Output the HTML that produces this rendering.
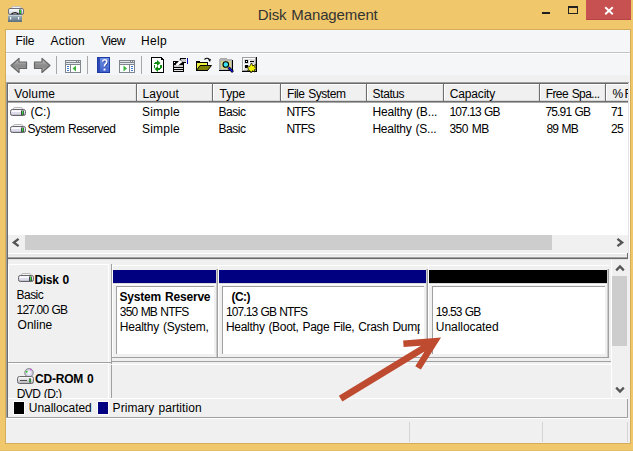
<!DOCTYPE html>
<html><head><meta charset="utf-8">
<style>
*{margin:0;padding:0;box-sizing:border-box}
html,body{width:633px;height:451px;overflow:hidden;background:#F0C76B;font-family:"Liberation Sans",sans-serif;font-size:12px;color:#000}
.a{position:absolute}
.t{position:absolute;white-space:nowrap;line-height:15px}
.b{font-weight:bold}
</style></head><body>
<svg class="a" style="left:6px;top:4px" width="20" height="20" viewBox="0 0 20 20"><defs><linearGradient id="tg1" x1="0" y1="0" x2="0" y2="1"><stop offset="0" stop-color="#FFFFFF"/><stop offset="0.6" stop-color="#E2E2EA"/><stop offset="1" stop-color="#B8B8C0"/></linearGradient><linearGradient id="tg2" x1="0" y1="0" x2="0" y2="1"><stop offset="0" stop-color="#A8B8C4"/><stop offset="1" stop-color="#5A6E7C"/></linearGradient></defs><path d="M5 4.5 Q5.5 2.5 7.5 2.5 L13 2.5 Q15 2.5 15.5 4.5" fill="#F0F0F0" stroke="#C0C0C0"/><rect x="2.5" y="4.5" width="15" height="6" rx="1.5" fill="url(#tg1)" stroke="#707078"/><path d="M5.5 10 Q9 7.2 12.5 10" fill="none" stroke="#1A1A1A" stroke-width="1.4"/><rect x="13" y="5.5" width="2.5" height="4.5" fill="#3A4448"/><rect x="13.6" y="6" width="1.3" height="3.5" fill="#30E030"/><rect x="2" y="11" width="14" height="7" fill="url(#tg2)"/><rect x="2" y="11" width="14" height="1" fill="#C4D0D8"/><rect x="4" y="13" width="1.2" height="2.5" fill="#F8F8F8"/><rect x="12" y="13" width="1.2" height="2.5" fill="#F8F8F8"/></svg>
<div class="a" style="left:542px;top:12px;width:8px;height:2px;background:#1E1E1E"></div>
<div class="a" style="left:568px;top:6px;width:10px;height:8px;border:1px solid #222;border-top-width:2px"></div>
<div class="a" style="left:586px;top:0;width:45px;height:20px;background:#C75050;border-bottom:1px solid #B84545"></div>
<svg class="a" style="left:586px;top:0" width="45" height="20"><path d="M19.2 7.2 L26.8 14.3 M26.8 7.2 L19.2 14.3" stroke="#fff" stroke-width="1.9"/></svg>
<div class="a" style="left:5px;top:29px;width:626px;height:415px;border:1px solid #D3AC5C;background:#F0F0F0"></div>
<div class="a" style="left:6px;top:30px;width:624px;height:22px;background:#F5F6F7"></div>
<div class="a" style="left:6px;top:52px;width:624px;height:1px;background:#C4C4C4"></div>
<div class="a" style="left:6px;top:53px;width:624px;height:22px;background:#F5F6F7;border-top:1px solid #FFFFFF"></div>
<div class="a" style="left:6px;top:75px;width:624px;height:8px;background:#F0F0F0"></div>
<svg class="a" style="left:0;top:0" width="270" height="80" viewBox="0 0 270 80">
<defs>
<linearGradient id="ag" x1="0" y1="0" x2="0" y2="1"><stop offset="0" stop-color="#D8D8D8"/><stop offset="0.45" stop-color="#8E8E8E"/><stop offset="0.6" stop-color="#8A8A8A"/><stop offset="1" stop-color="#C4C4C4"/></linearGradient>
<linearGradient id="hg2" x1="0" y1="0" x2="0" y2="1"><stop offset="0" stop-color="#7090E4"/><stop offset="1" stop-color="#3F5FCC"/></linearGradient>
<linearGradient id="hg" x1="0" y1="0" x2="1" y2="0"><stop offset="0" stop-color="#2B3FA8"/><stop offset="0.25" stop-color="#3552C0"/><stop offset="0.3" stop-color="#4B6AD6"/><stop offset="1" stop-color="#3A57C6"/></linearGradient>
</defs>
<!-- back -->
<path d="M11 65.5 L19 58.5 L19 62 L26.5 62 L26.5 68.5 L19 68.5 L19 72.5 Z" fill="url(#ag)" stroke="#666" stroke-width="1.2" stroke-linejoin="round"/>
<!-- forward -->
<path d="M50 65.5 L42 58.5 L42 62 L34.5 62 L34.5 68.5 L42 68.5 L42 72.5 Z" fill="url(#ag)" stroke="#666" stroke-width="1.2" stroke-linejoin="round"/>
<!-- separators -->
<g shape-rendering="crispEdges">
<rect x="56" y="56" width="1" height="18" fill="#A8A8A8"/>
<rect x="87" y="56" width="1" height="18" fill="#A8A8A8"/>
<rect x="141" y="56" width="1" height="18" fill="#A8A8A8"/>
<!-- console tree -->
<rect x="65" y="60" width="16" height="13" fill="#80868E"/>
<rect x="66" y="61" width="10" height="1" fill="#E6E8EC"/>
<rect x="77" y="61" width="1" height="1" fill="#E6E8EC"/>
<rect x="79" y="61" width="1" height="1" fill="#E6E8EC"/>
<rect x="66" y="63" width="14" height="1" fill="#E6E8EC"/>
<rect x="66" y="65" width="4" height="7" fill="#fff"/>
<rect x="71" y="65" width="9" height="7" fill="#fff"/>
<rect x="67" y="66" width="2" height="1" fill="#3D7FD2"/>
<rect x="67" y="68" width="2" height="1" fill="#3D7FD2"/>
<rect x="67" y="70" width="2" height="1" fill="#3D7FD2"/>
<!-- action pane -->
<rect x="119" y="60" width="16" height="13" fill="#80868E"/>
<rect x="120" y="61" width="10" height="1" fill="#E6E8EC"/>
<rect x="131" y="61" width="1" height="1" fill="#E6E8EC"/>
<rect x="133" y="61" width="1" height="1" fill="#E6E8EC"/>
<rect x="120" y="63" width="14" height="1" fill="#E6E8EC"/>
<rect x="120" y="65" width="9" height="7" fill="#fff"/>
<rect x="130" y="65" width="4" height="7" fill="#fff"/>
<rect x="131" y="66" width="2" height="1" fill="#3D7FD2"/>
<rect x="131" y="68" width="2" height="1" fill="#3D7FD2"/>
<rect x="131" y="70" width="2" height="1" fill="#3D7FD2"/>
<!-- help -->
<rect x="97" y="57" width="13" height="16" fill="#1F3BA8"/>
<rect x="98" y="58" width="11" height="14" fill="url(#hg2)"/>
<rect x="98" y="58" width="2" height="14" fill="#2C48B4"/>
</g>
<path d="M72.5 68.5 L76 65.5 L76 71.5 Z" fill="#3DB53D"/>
<path d="M127 68.5 L123.5 65.5 L123.5 71.5 Z" fill="#3DB53D"/>
<path d="M102.6 61.6 Q102.8 59.8 104.8 59.8 Q106.8 59.8 106.8 61.8 Q106.8 63.3 105.2 64.4 Q104.5 65 104.5 66.6" fill="none" stroke="#233a9a" stroke-width="1.6" transform="translate(0.6 0.6)"/><path d="M102.6 61.6 Q102.8 59.8 104.8 59.8 Q106.8 59.8 106.8 61.8 Q106.8 63.3 105.2 64.4 Q104.5 65 104.5 66.6" fill="none" stroke="#fff" stroke-width="1.6"/>
<rect x="103.6" y="68.6" width="1.9" height="1.9" fill="#fff"/>
<!-- refresh doc -->
<g shape-rendering="crispEdges">
<rect x="151" y="57" width="13" height="16" fill="#000"/>
<rect x="152" y="58" width="11" height="14" fill="#fff"/>
<rect x="161" y="57" width="3" height="3" fill="#F5F6F7"/>
<rect x="161" y="57" width="1" height="3" fill="#000"/>
<rect x="161" y="59" width="2" height="1" fill="#000"/>
<rect x="162" y="58" width="1" height="1" fill="#000"/>
<rect x="163" y="59" width="1" height="1" fill="#000"/>
<!-- green arrows -->
<rect x="155" y="62" width="3" height="2" fill="#0E8E0E"/>
<rect x="154" y="63" width="1" height="1" fill="#0E8E0E"/>
<rect x="153.5" y="65" width="1.5" height="3" fill="#0E8E0E"/>
<rect x="160" y="65" width="1.5" height="3" fill="#0E8E0E"/>
<rect x="157" y="68" width="3" height="2" fill="#0E8E0E"/>
<rect x="160" y="68" width="1" height="1" fill="#0E8E0E"/>
</g>
<path d="M157 60 L160.5 63 L157 66 Z" fill="#0E8E0E"/>
<path d="M158 66 L154.5 69 L158 72 Z" fill="#0E8E0E"/>
<!-- properties -->
<g shape-rendering="crispEdges">
<rect x="173" y="61" width="11" height="11" fill="#000"/>
<rect x="174" y="62" width="1" height="1" fill="#fff"/>
<rect x="174" y="65" width="9" height="2" fill="#C8C8C8"/>
<rect x="174" y="68" width="9" height="1" fill="#E0E0E0"/>
<rect x="174" y="70" width="9" height="1" fill="#E0E0E0"/>
<rect x="180" y="58" width="6" height="5" fill="#000"/>
<rect x="181" y="59" width="5" height="3" fill="#C8C8C8"/>
<rect x="187" y="58" width="1" height="6" fill="#0000B0"/>
</g>
<path d="M175.5 64.5 L180 59.5 L182.5 62 L178 66" fill="#fff" stroke="#000" stroke-width="0.9" stroke-dasharray="1 1"/>
<!-- open folder -->
<g shape-rendering="crispEdges">
<rect x="196" y="61" width="4" height="1" fill="#000"/>
<rect x="196" y="62" width="12" height="1" fill="#000"/>
<rect x="196" y="61" width="1" height="10" fill="#000"/>
<rect x="207" y="62" width="1" height="4" fill="#000"/>
<rect x="197" y="63" width="10" height="3" fill="#F0F040"/>
<rect x="197" y="66" width="3" height="3" fill="#F0F040"/>
<rect x="196" y="70" width="12" height="1" fill="#000"/>
</g>
<path d="M200 65.5 L211.5 65.5 L207.5 70.5 L196.5 70.5 Z" fill="#808000" stroke="#000" stroke-width="1"/>
<path d="M204.5 59.5 Q207 57 209.5 59.5" fill="none" stroke="#000" stroke-width="1.1"/>
<path d="M208 59.5 L211 59 L210 62 Z" fill="#000"/>
<!-- search -->
<g shape-rendering="crispEdges">
<rect x="220" y="58" width="7" height="2" fill="#A8A8A8"/>
<rect x="219" y="60" width="14" height="11" fill="#000"/>
<rect x="219" y="59" width="13" height="11" fill="#B4B4B4"/>
<rect x="221" y="61" width="10" height="8" fill="#D4D488"/>
</g>
<circle cx="225.8" cy="64.5" r="2.8" fill="#38E4F0" stroke="#000" stroke-width="1.1"/>
<path d="M228.5 67.5 L233 72" stroke="#000" stroke-width="2.6"/>
<path d="M228.8 67.8 L232.6 71.6" stroke="#1010F0" stroke-width="1.4"/>
<!-- last -->
<g shape-rendering="crispEdges">
<rect x="242" y="57" width="15" height="15" fill="#000"/>
<rect x="242" y="57" width="14" height="14" fill="#A0A0A0"/>
<rect x="243" y="58" width="12" height="12" fill="#fff"/>
<rect x="244" y="59" width="11" height="11" fill="#DCDCDC"/>
<rect x="245" y="60" width="3" height="3" fill="#000"/>
<rect x="246" y="61" width="1" height="1" fill="#fff"/>
<rect x="250" y="61" width="4" height="1" fill="#000"/>
<rect x="249" y="60" width="1" height="9" fill="#fff"/>
<rect x="244" y="64" width="11" height="1" fill="#fff"/>
<rect x="245" y="65" width="3" height="3" fill="#000"/>
<rect x="251" y="65" width="3" height="3" fill="#000"/>
</g>
<path d="M251.5 63 L252.8 65.8 L255.5 64.5 L254.6 67.3 L257 68.6 L254.3 69.6 L255 72 L252.4 70.8 L251 73 L250 70.6 L247.6 71.2 L248.6 68.8 L246.8 67.3 L249.5 66.6 Z" fill="#F4F400" stroke="#000" stroke-width="0.7"/>
</svg>

<div class="a" style="left:6px;top:82px;width:624px;height:172px;background:#FFFFFF"></div>
<div class="a" style="left:6px;top:82px;width:623px;height:1px;background:#A0A0A0"></div>
<div class="a" style="left:7px;top:83px;width:621px;height:1px;background:#696969"></div>
<div class="a" style="left:8px;top:84px;width:621px;height:18px;background:#F0F0F0"></div>
<div class="a" style="left:8px;top:84px;width:621px;height:1px;background:#FFFFFF"></div>
<div class="a" style="left:8px;top:84px;width:1px;height:17px;background:#FFFFFF"></div>
<div class="a" style="left:8px;top:100px;width:621px;height:1px;background:#D8D8D8"></div>
<div class="a" style="left:8px;top:101px;width:621px;height:1px;background:#6E6E6E"></div>
<div class="a" style="left:8px;top:102px;width:621px;height:1px;background:#A8A8A8"></div>
<div class="a" style="left:135px;top:85px;width:1px;height:15px;background:#E3E3E3"></div>
<div class="a" style="left:136px;top:84px;width:1px;height:17px;background:#6E6E6E"></div>
<div class="a" style="left:137px;top:85px;width:1px;height:15px;background:#FFFFFF"></div>
<div class="a" style="left:211px;top:85px;width:1px;height:15px;background:#E3E3E3"></div>
<div class="a" style="left:212px;top:84px;width:1px;height:17px;background:#6E6E6E"></div>
<div class="a" style="left:213px;top:85px;width:1px;height:15px;background:#FFFFFF"></div>
<div class="a" style="left:279px;top:85px;width:1px;height:15px;background:#E3E3E3"></div>
<div class="a" style="left:280px;top:84px;width:1px;height:17px;background:#6E6E6E"></div>
<div class="a" style="left:281px;top:85px;width:1px;height:15px;background:#FFFFFF"></div>
<div class="a" style="left:365px;top:85px;width:1px;height:15px;background:#E3E3E3"></div>
<div class="a" style="left:366px;top:84px;width:1px;height:17px;background:#6E6E6E"></div>
<div class="a" style="left:367px;top:85px;width:1px;height:15px;background:#FFFFFF"></div>
<div class="a" style="left:442px;top:85px;width:1px;height:15px;background:#E3E3E3"></div>
<div class="a" style="left:443px;top:84px;width:1px;height:17px;background:#6E6E6E"></div>
<div class="a" style="left:444px;top:85px;width:1px;height:15px;background:#FFFFFF"></div>
<div class="a" style="left:538px;top:85px;width:1px;height:15px;background:#E3E3E3"></div>
<div class="a" style="left:539px;top:84px;width:1px;height:17px;background:#6E6E6E"></div>
<div class="a" style="left:540px;top:85px;width:1px;height:15px;background:#FFFFFF"></div>
<div class="a" style="left:604px;top:85px;width:1px;height:15px;background:#E3E3E3"></div>
<div class="a" style="left:605px;top:84px;width:1px;height:17px;background:#6E6E6E"></div>
<div class="a" style="left:606px;top:85px;width:1px;height:15px;background:#FFFFFF"></div>
<div class="a" style="left:7px;top:102px;width:622px;height:40px;overflow:hidden">
<svg class="a" style="left:3px;top:5px" width="16" height="10" viewBox="0 0 16 10"><defs><linearGradient id="dg0" x1="0" y1="0" x2="0" y2="1"><stop offset="0" stop-color="#FFFFFF"/><stop offset="0.5" stop-color="#E0E0EC"/><stop offset="1" stop-color="#B4B4C0"/></linearGradient></defs><path d="M2.5 3 Q3 0.5 5 0.5 L11 0.5 Q13 0.5 13.5 3" fill="#F4F4F4" stroke="#B8B8B8" stroke-width="1"/><rect x="0.5" y="2.5" width="15" height="6" rx="1.8" fill="url(#dg0)" stroke="#66666C" stroke-width="1"/><rect x="2" y="4" width="9" height="3" fill="#DCDCEA"/><rect x="2" y="4" width="9" height="1" fill="#FAFAFF"/><rect x="11" y="3.5" width="3" height="4.5" fill="#404848"/><rect x="12" y="4" width="1.2" height="3.5" fill="#3AE03A"/></svg>
<svg class="a" style="left:3px;top:22px" width="16" height="10" viewBox="0 0 16 10"><defs><linearGradient id="dg1" x1="0" y1="0" x2="0" y2="1"><stop offset="0" stop-color="#FFFFFF"/><stop offset="0.5" stop-color="#E0E0EC"/><stop offset="1" stop-color="#B4B4C0"/></linearGradient></defs><path d="M2.5 3 Q3 0.5 5 0.5 L11 0.5 Q13 0.5 13.5 3" fill="#F4F4F4" stroke="#B8B8B8" stroke-width="1"/><rect x="0.5" y="2.5" width="15" height="6" rx="1.8" fill="url(#dg1)" stroke="#66666C" stroke-width="1"/><rect x="2" y="4" width="9" height="3" fill="#DCDCEA"/><rect x="2" y="4" width="9" height="1" fill="#FAFAFF"/><rect x="11" y="3.5" width="3" height="4.5" fill="#404848"/><rect x="12" y="4" width="1.2" height="3.5" fill="#3AE03A"/></svg>
</div>
<div class="a" style="left:8px;top:235px;width:620px;height:17px;background:#F0F0F0"></div>
<div class="a" style="left:25px;top:235px;width:527px;height:15px;background:#CDCDCD"></div>
<svg class="a" style="left:8px;top:235px" width="17" height="17"><path d="M10.6 3.8 L5.8 7.5 L10.6 11.2" fill="none" stroke="#555" stroke-width="2.3"/></svg>
<svg class="a" style="left:611px;top:235px" width="17" height="17"><path d="M6.4 3.8 L11.2 7.5 L6.4 11.2" fill="none" stroke="#555" stroke-width="2.3"/></svg>
<div class="a" style="left:6px;top:252px;width:624px;height:166px;background:#F0F0F0;"></div>
<div class="a" style="left:8px;top:253px;width:620px;height:1px;background:#FFFFFF;"></div>
<div class="a" style="left:8px;top:254px;width:620px;height:2px;background:#E8E8E8;"></div>
<div class="a" style="left:7px;top:257px;width:621px;height:1px;background:#A0A0A0;"></div>
<div class="a" style="left:7px;top:258px;width:621px;height:1px;background:#696969;"></div>
<div class="a" style="left:7px;top:259px;width:621px;height:1px;background:#E3E3E3;"></div>
<div class="a" style="left:627px;top:253px;width:1px;height:6px;background:#6A6A6A;"></div>
<div class="a" style="left:6px;top:83px;width:1px;height:335px;background:#A0A0A0;"></div>
<div class="a" style="left:7px;top:83px;width:1px;height:335px;background:#696969;"></div>
<div class="a" style="left:7px;top:417px;width:621px;height:1px;background:#A0A0A0;"></div>
<div class="a" style="left:627px;top:398px;width:1px;height:20px;background:#A0A0A0;"></div>
<div class="a" style="left:628px;top:83px;width:2px;height:335px;background:#F0F0F0;"></div>
<div class="a" style="left:628px;top:83px;width:1px;height:171px;background:#E3E3E3;"></div>
<div class="a" style="left:629px;top:83px;width:1px;height:171px;background:#FFFFFF;"></div>
<div class="a" style="left:8px;top:264px;width:101px;height:1px;background:#FFFFFF;"></div>
<div class="a" style="left:8px;top:264px;width:1px;height:98px;background:#FFFFFF;"></div>
<div class="a" style="left:108px;top:264px;width:1px;height:98px;background:#FFFFFF;"></div>
<div class="a" style="left:8px;top:362px;width:103px;height:1px;background:#A0A0A0;"></div>
<div class="a" style="left:8px;top:363px;width:101px;height:1px;background:#FFFFFF;"></div>
<div class="a" style="left:111px;top:264px;width:1px;height:100px;background:#A0A0A0;"></div>
<div class="a" style="left:111px;top:365px;width:1px;height:33px;background:#A0A0A0;"></div>
<div class="a" style="left:108px;top:363px;width:1px;height:35px;background:#FFFFFF;"></div>
<div class="a" style="left:112px;top:265px;width:497px;height:1px;background:#FFFFFF;"></div>
<div class="a" style="left:112px;top:266px;width:1px;height:91px;background:#FFFFFF;"></div>
<div class="a" style="left:113px;top:270px;width:103px;height:13px;background:#000080;"></div>
<div class="a" style="left:113px;top:283px;width:103px;height:1px;background:#DADADA;"></div>
<div class="a" style="left:112px;top:284px;width:104px;height:1px;background:#FFFFFF;"></div>
<div class="a" style="left:116px;top:286px;width:98px;height:68px;background:#FFFFFF;border-top:1px solid #A0A0A0;border-left:1px solid #A0A0A0"></div>
<div class="a" style="left:218px;top:266px;width:1px;height:91px;background:#FFFFFF;"></div>
<div class="a" style="left:219px;top:270px;width:207px;height:13px;background:#000080;"></div>
<div class="a" style="left:219px;top:283px;width:207px;height:1px;background:#DADADA;"></div>
<div class="a" style="left:218px;top:284px;width:208px;height:1px;background:#FFFFFF;"></div>
<div class="a" style="left:222px;top:286px;width:202px;height:68px;background:#FFFFFF;border-top:1px solid #A0A0A0;border-left:1px solid #A0A0A0"></div>
<div class="a" style="left:428px;top:266px;width:1px;height:91px;background:#FFFFFF;"></div>
<div class="a" style="left:429px;top:270px;width:178px;height:13px;background:#000000;"></div>
<div class="a" style="left:429px;top:283px;width:178px;height:1px;background:#DADADA;"></div>
<div class="a" style="left:428px;top:284px;width:179px;height:1px;background:#FFFFFF;"></div>
<div class="a" style="left:432px;top:286px;width:173px;height:68px;background:#FFFFFF;border-top:1px solid #A0A0A0;border-left:1px solid #A0A0A0"></div>
<div class="a" style="left:216px;top:269px;width:1px;height:88px;background:#CCCCCC;"></div>
<div class="a" style="left:217px;top:269px;width:1px;height:88px;background:#A0A0A0;"></div>
<div class="a" style="left:426px;top:269px;width:1px;height:88px;background:#CCCCCC;"></div>
<div class="a" style="left:427px;top:269px;width:1px;height:88px;background:#A0A0A0;"></div>
<div class="a" style="left:607px;top:269px;width:1px;height:88px;background:#CCCCCC;"></div>
<div class="a" style="left:608px;top:269px;width:1px;height:89px;background:#A0A0A0;"></div>
<div class="a" style="left:111px;top:357px;width:498px;height:1px;background:#A0A0A0;"></div>
<div class="a" style="left:111px;top:361px;width:500px;height:1px;background:#A0A0A0;"></div>
<div class="a" style="left:112px;top:364px;width:499px;height:1px;background:#FFFFFF;"></div>
<div class="a" style="left:611px;top:260px;width:1px;height:138px;background:#FFFFFF;"></div>
<div class="a" style="left:612px;top:260px;width:16px;height:138px;background:#F0F0F0;"></div>
<div class="a" style="left:612px;top:276px;width:15px;height:70px;background:#CDCDCD;"></div>
<svg class="a" style="left:612px;top:260px" width="16" height="17"><path d="M4.2 10.4 L8 6.4 L11.8 10.4" fill="none" stroke="#555" stroke-width="2.3"/></svg>
<svg class="a" style="left:612px;top:381px" width="16" height="17"><path d="M4.2 6.6 L8 10.6 L11.8 6.6" fill="none" stroke="#555" stroke-width="2.3"/></svg>
<div class="a" style="left:8px;top:398px;width:620px;height:1px;background:#FFFFFF;"></div>
<div class="a" style="left:13px;top:401px;width:12px;height:14px;background:#000000;border:1px solid #FFFFFF"></div>
<div class="a" style="left:97px;top:401px;width:12px;height:14px;background:#000080;border:1px solid #FFFFFF"></div>
<svg class="a" style="left:18px;top:273px" width="16" height="10" viewBox="0 0 16 10"><defs><linearGradient id="dk0" x1="0" y1="0" x2="0" y2="1"><stop offset="0" stop-color="#FFFFFF"/><stop offset="0.5" stop-color="#E0E0EC"/><stop offset="1" stop-color="#B4B4C0"/></linearGradient></defs><path d="M2.5 3 Q3 0.5 5 0.5 L11 0.5 Q13 0.5 13.5 3" fill="#F4F4F4" stroke="#B8B8B8" stroke-width="1"/><rect x="0.5" y="2.5" width="15" height="6" rx="1.8" fill="url(#dk0)" stroke="#66666C" stroke-width="1"/><rect x="2" y="4" width="9" height="3" fill="#DCDCEA"/><rect x="2" y="4" width="9" height="1" fill="#FAFAFF"/><rect x="11" y="3.5" width="3" height="4.5" fill="#404848"/><rect x="12" y="4" width="1.2" height="3.5" fill="#3AE03A"/></svg>
<svg class="a" style="left:17px;top:368px" width="17" height="17" viewBox="0 0 17 17"><defs><linearGradient id="cdg" x1="0" y1="0" x2="0" y2="1"><stop offset="0" stop-color="#FFFFFF"/><stop offset="1" stop-color="#B4B4BC"/></linearGradient><radialGradient id="cdd"><stop offset="0" stop-color="#FFFFFF"/><stop offset="0.6" stop-color="#DCD8F0"/><stop offset="1" stop-color="#B0B8C8"/></radialGradient></defs><circle cx="12" cy="4.8" r="4.3" fill="url(#cdd)" stroke="#8A8A8A" stroke-width="0.9"/><circle cx="9.6" cy="3.8" r="1" fill="#30D030"/><circle cx="14" cy="1.6" r="0.8" fill="#D040D0"/><rect x="0.5" y="8.5" width="16" height="7" rx="2" fill="url(#cdg)" stroke="#6A6A6E" stroke-width="1"/><rect x="3" y="12" width="7" height="1" fill="#505050"/><rect x="12" y="10.5" width="2" height="4" fill="#404848"/><rect x="12.5" y="11" width="1" height="3" fill="#3AE03A"/></svg>
<div class="a" style="left:0;top:450px;width:633px;height:1px;background:#E2BC66"></div>
<div class="a" style="left:6px;top:418px;width:624px;height:25px;background:#F0F0F0;border-top:1px solid #fff"></div>
<div class="a" style="left:409px;top:422px;width:1px;height:20px;background:#D5D5D5"></div>
<div class="a" style="left:542px;top:422px;width:1px;height:20px;background:#D5D5D5"></div>
<div class="a" style="left:627px;top:422px;width:1px;height:20px;background:#D5D5D5"></div>
<div class="t" style="left:257.8px;top:7px;letter-spacing:-0.121px;word-spacing:0.8px;font-size:15px;color:#333">Disk Management</div>
<div class="t" style="left:15.5px;top:34px;letter-spacing:-0.167px">File</div>
<div class="t" style="left:50.6px;top:34px;letter-spacing:0.16px">Action</div>
<div class="t" style="left:101px;top:34px;letter-spacing:-0.433px">View</div>
<div class="t" style="left:141px;top:34px;letter-spacing:0.333px">Help</div>
<div class="t" style="left:14.2px;top:87px;letter-spacing:0.16px">Volume</div>
<div class="t" style="left:142.6px;top:87px;letter-spacing:0.04px">Layout</div>
<div class="t" style="left:219.6px;top:87px;letter-spacing:-0.133px">Type</div>
<div class="t" style="left:287px;top:87px;letter-spacing:-0.45px;word-spacing:0.8px">File System</div>
<div class="t" style="left:372.6px;top:87px;letter-spacing:-0.4px">Status</div>
<div class="t" style="left:449.8px;top:87px;letter-spacing:-0.171px">Capacity</div>
<div class="t" style="left:545.7px;top:87px;letter-spacing:-0.57px;word-spacing:0.8px">Free Spa...</div>
<div class="a" style="left:606px;top:84px;width:22px;height:18px;overflow:hidden"><div class="t" style="left:6.600000000000023px;top:3px;letter-spacing:-1px">% Free</div></div>
<div class="t" style="left:30.4px;top:105px">(C:)</div>
<div class="t" style="left:142.1px;top:105px;letter-spacing:0.18px">Simple</div>
<div class="t" style="left:218.6px;top:105px;letter-spacing:-0.475px">Basic</div>
<div class="t" style="left:286.5px;top:105px;letter-spacing:-0.833px">NTFS</div>
<div class="t" style="left:372.4px;top:105px;letter-spacing:-0.15px;word-spacing:0.8px">Healthy (B...</div>
<div class="t" style="left:449.4px;top:105px;letter-spacing:-0.875px;word-spacing:0.8px">107.13 GB</div>
<div class="t" style="left:545.4px;top:105px;letter-spacing:-0.829px;word-spacing:0.8px">75.91 GB</div>
<div class="t" style="left:611px;top:105px;letter-spacing:-1.0px">71</div>
<div class="t" style="left:27.4px;top:122px;letter-spacing:-0.5px;word-spacing:0.8px">System Reserved</div>
<div class="t" style="left:142.1px;top:122px;letter-spacing:0.18px">Simple</div>
<div class="t" style="left:218.6px;top:122px;letter-spacing:-0.475px">Basic</div>
<div class="t" style="left:286.5px;top:122px;letter-spacing:-0.833px">NTFS</div>
<div class="t" style="left:372.4px;top:122px;letter-spacing:-0.217px;word-spacing:0.8px">Healthy (S...</div>
<div class="t" style="left:449.4px;top:122px;letter-spacing:-0.48px;word-spacing:0.8px">350 MB</div>
<div class="t" style="left:546.4px;top:122px;letter-spacing:-0.775px;word-spacing:0.8px">89 MB</div>
<div class="t" style="left:611px;top:122px;letter-spacing:-0.7px">25</div>
<div class="t b" style="left:34.4px;top:273px;letter-spacing:-0.26px;word-spacing:0.8px">Disk 0</div>
<div class="t" style="left:16.6px;top:288px;letter-spacing:-0.55px">Basic</div>
<div class="t" style="left:16.6px;top:303px;letter-spacing:-0.837px;word-spacing:0.8px">127.00 GB</div>
<div class="t" style="left:17.6px;top:318px">Online</div>
<div class="t b" style="left:119.5px;top:290px;letter-spacing:-0.192px;word-spacing:0.8px">System Reserve</div>
<div class="t" style="left:119.8px;top:305px;letter-spacing:-0.82px;word-spacing:0.8px">350 MB NTFS</div>
<div class="a" style="left:117px;top:287px;width:94px;height:66px;overflow:hidden"><div class="t" style="left:2.799999999999997px;top:33px;letter-spacing:-0.213px;word-spacing:0.8px">Healthy (System, Active, Primary Partition)</div></div>
<div class="t b" style="left:231.6px;top:290px;letter-spacing:-0.567px">(C:)</div>
<div class="t" style="left:226px;top:305px;letter-spacing:-0.9px;word-spacing:0.8px">107.13 GB NTFS</div>
<div class="t" style="left:435.8px;top:305px;letter-spacing:-0.857px;word-spacing:0.8px">19.53 GB</div>
<div class="t" style="left:435.8px;top:320px;letter-spacing:-0.05px">Unallocated</div>
<div class="t b" style="left:35px;top:372px;letter-spacing:-0.2px;word-spacing:0.8px">CD-ROM 0</div>
<div class="a" style="left:8px;top:364px;width:100px;height:34px;overflow:hidden"><div class="t" style="left:8.8px;top:23px;letter-spacing:-0.6px;word-spacing:0.8px">DVD (D:)</div></div>
<div class="t" style="left:28.8px;top:401px;letter-spacing:-0.04px">Unallocated</div>
<div class="t" style="left:112.6px;top:401px;letter-spacing:0.05px;word-spacing:0.8px">Primary partition</div>
<div class="a" style="left:223px;top:287px;width:197px;height:66px;overflow:hidden"><div class="t" style="left:3px;top:33px;letter-spacing:-0.3px;word-spacing:0.8px">Healthy (Boot, Page File, Crash Dump, Primary Partition)</div></div>
<svg class="a" style="left:0;top:0" width="633" height="451"><polygon transform="translate(441 337.4) rotate(-31.4)" points="-117.6,-3.375 -21.35,-3.375 -37,-11.2 -34,-17 0,0 -34,17 -37,11.2 -21.35,3.375 -117.6,3.375" fill="#BE4A2F"/></svg>
</body></html>
